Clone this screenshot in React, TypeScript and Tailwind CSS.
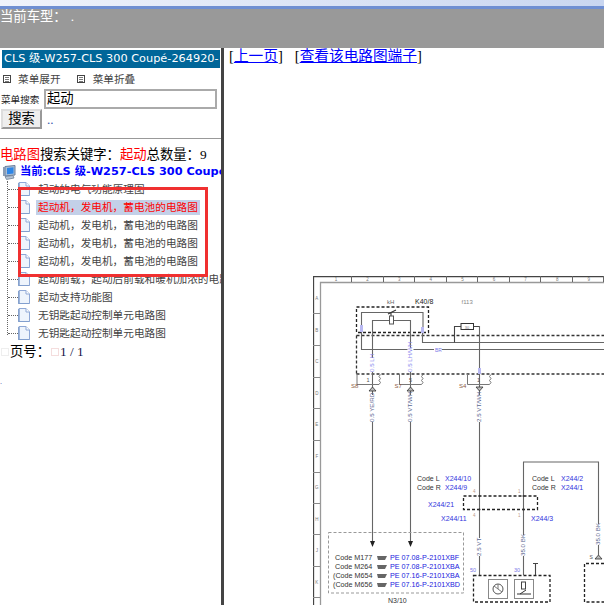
const cjk = "font-['Liberation_Serif','Noto_Sans_CJK_SC',serif]";

const treeRows = [
  "起动的电气功能原理图",
  "起动机，发电机，蓄电池的电路图",
  "起动机，发电机，蓄电池的电路图",
  "起动机，发电机，蓄电池的电路图",
  "起动机，发电机，蓄电池的电路图",
  "起动前载，起动后前载和暖机加浓的电路图",
  "起动支持功能图",
  "无钥匙起动控制单元电路图",
  "无钥匙起动控制单元电路图",
];

const FileIcon = () => (
  <svg width="12" height="14" viewBox="0 0 12 14" className="shrink-0">
    <path d="M1 .5H8L11.5 4V13.5H1Z" fill="#eef4fc" stroke="#8fa8d6" />
    <path d="M.8 1V14H11.5" fill="none" stroke="#7f9ccb" strokeWidth="1.4" />
    <path d="M8 .5V4H11.5" fill="#fff" stroke="#8fa8d6" />
  </svg>
);

const ComputerIcon = () => (
  <svg width="13" height="15" viewBox="0 0 13 15" className="shrink-0">
    <path d="M2 1.5L12 .5V10L2 11Z" fill="#a8bdd6" stroke="#6a7f9c" />
    <path d="M4 3L10.5 2.3V8.6L4 9.3Z" fill="#2f86e6" />
    <path d="M1 2V11" stroke="#8c9db3" strokeWidth="2" />
    <path d="M2 11.5L10 10.5L11 13L3.5 14.5Z" fill="#b7c4d4" stroke="#6f8096" strokeWidth=".8" />
  </svg>
);

const Sq = () => (
  <svg width="8" height="8" viewBox="0 0 8 8" className="shrink-0">
    <rect x=".5" y=".5" width="7" height="7" fill="#fff" stroke="#444" />
    <path d="M2 2.5H6M2 4.5H6M2 6.5H6" stroke="#555" strokeWidth=".8" />
  </svg>
);

const Wire = ({ d, c = "#666", w = 1.1 }: { d: string; c?: string; w?: number }) => (
  <path d={d} fill="none" stroke={c} strokeWidth={w} />
);

const Dash = ({ d, c = "#222", w = 1.3 }: { d: string; c?: string; w?: number }) => (
  <path d={d} fill="none" stroke={c} strokeWidth={w} strokeDasharray="3 2" />
);

// wire label reading upward, wire is blanked behind it
const UpLabel = ({ x, y, t, c = "#5a6690", len = 27 }: { x: number; y: number; t: string; c?: string; len?: number }) => (
  <g>
    <rect x={x - 3} y={y - len} width="6" height={len} fill="#fff" />
    <text x={x} y={y} fontSize="6.2" fill={c} transform={`rotate(-90 ${x} ${y})`} dominantBaseline="middle">
      {t}
    </text>
  </g>
);

const codes = [
  ["Code M177", "PE 07.08-P-2101XBF", 335],
  ["Code M264", "PE 07.08-P-2101XBA", 335],
  ["(Code M654", "PE 07.16-P-2101XBA", 333],
  ["(Code M656", "PE 07.16-P-2101XBD", 333],
] as const;

const connectors = [
  { x: 357, n: "1", s: "S8", lx: 351 },
  { x: 399.5, n: "5", s: "S7", lx: 394.5 },
  { x: 467.5, n: "1", s: "S4", lx: 459 },
];

const Diagram = () => (
  <svg
    width="291"
    height="329"
    viewBox="313 276 291 329"
    className="block shrink-0"
    fontFamily="Liberation Sans, sans-serif"
  >
    {/* frame */}
    <path d="M313.5 605V276.5H604" fill="none" stroke="#444" strokeWidth="1.3" />
    <path d="M320.5 605V282.5H604" fill="none" stroke="#999" strokeWidth="1.3" />
    {[351, 383, 414, 446, 477, 509, 540, 572, 603].map((x) => (
      <Wire key={x} d={`M${x}.5 276V282`} c="#666" w={1} />
    ))}
    {[1, 2, 3, 4, 5, 6, 7, 8, 9].map((n, i) => (
      <text key={n} x={336 + i * 31.6} y={281} fontSize="4.5" fill="#777" textAnchor="middle">
        {n}
      </text>
    ))}
    {[313, 345, 377, 408, 440, 472, 503, 534, 566, 597].map((y) => (
      <Wire key={y} d={`M313 ${y}.5H320`} c="#888" w={1} />
    ))}
    {["A", "B", "C", "D", "E", "F", "G", "H", "J", "K"].map((l, i) => (
      <text key={l} x={316.8} y={300 + i * 31.5} fontSize="4.5" fill="#777" textAnchor="middle">
        {l}
      </text>
    ))}

    {/* K40/8 relay */}
    <text x="387" y="304" fontSize="6" fill="#666">kH</text>
    <text x="415" y="304" fontSize="7" fill="#222">K40/8</text>
    <text x="461.5" y="304" fontSize="6" fill="#888">f113</text>
    <Dash d="M356.5 307H428.5V332.5H356.5Z" />
    <Wire d="M361.5 331V312.5H423V331" />
    <Wire d="M372.5 331V320.5H410.5V331" />
    <Wire d="M391 312.5V316M388 314L396 310" c="#333" />
    <rect x="389.5" y="316" width="4" height="8" fill="#fff" stroke="#555" />
    <Dash d="M356.5 335.5H604M356.5 374H604M356.5 335.5V374" c="#333" />
    <Wire d="M361.5 331V349.5H604" />
    <Wire d="M422.5 331V342.5H604" />
    <rect x="434" y="347" width="8" height="5" fill="#fff" />
    <text x="435" y="351.5" fontSize="5" fill="#7a7ae8">BR</text>

    {/* fuse */}
    <rect x="461" y="323.5" width="12.5" height="6" fill="#fff" stroke="#333" />
    <Wire d="M461 326.5H454.5V342.5M473.5 326.5H479.5" c="#444" />
    <text x="467" y="328.5" fontSize="4" fill="#777" textAnchor="middle">30</text>

    {/* wires */}
    <Wire d="M372.5 331V546" />
    <Wire d="M410.5 331V546" />
    <Wire d="M479.5 326V575" />
    <path d="M370 541H375L372.5 547ZM408 541H413L410.5 547Z" fill="#222" />

    <UpLabel x={372.5} y={372} t="0.5 LH" c="#8a8aee" len={14} />
    <UpLabel x={410.5} y={372} t="0.5 LH/WH" c="#8a8aee" len={24} />
    <rect x="360" y="325" width="3" height="7" fill="#b9b9f2" />
    <rect x="421" y="327" width="3" height="6" fill="#b9b9f2" />
    <rect x="478" y="368" width="3" height="6" fill="#b9b9f2" />

    {/* connectors */}
    {connectors.map(({ x, n, s, lx }) => (
      <g key={s}>
        <path
          d={`M${x} 374V384.5H${x + 22}l1.5 -2l-1.5 -2l1.5 -2l-1.5 -2l1.5 -2`}
          fill="none"
          stroke="#777"
        />
        <text x={x + 9.5} y={382} fontSize="5.5" fill="#555">{n}</text>
        <text x={lx} y={388} fontSize="6" fill="#8a5a44">{s}</text>
      </g>
    ))}
    <path d="M369 391H376L372.5 387ZM407 391H414L410.5 387Z" fill="#bbb" stroke="#333" strokeWidth=".8" />
    <path d="M476 387H483L479.5 391Z" fill="#bbb" stroke="#333" strokeWidth=".8" />
    <UpLabel x={372.5} y={422} t="0.5 YE/RD" />
    <UpLabel x={410.5} y={422} t="0.5 VT/WH" />
    <UpLabel x={479.5} y={422} t="2.5 VT/WH" />

    {/* X244 */}
    <g fontSize="7">
      <text x="417" y="480.5" fill="#333">Code L</text>
      <text x="445" y="480.5" fill="#3333dd">X244/10</text>
      <text x="417" y="490" fill="#333">Code R</text>
      <text x="445" y="490" fill="#3333dd">X244/9</text>
      <text x="532" y="480.5" fill="#333">Code L</text>
      <text x="561" y="480.5" fill="#3333dd">X244/2</text>
      <text x="532" y="490" fill="#333">Code R</text>
      <text x="561" y="490" fill="#3333dd">X244/1</text>
      <text x="428" y="507" fill="#3333dd">X244/21</text>
      <text x="441" y="521" fill="#3333dd">X244/11</text>
      <text x="531" y="521" fill="#3333dd">X244/3</text>
    </g>
    <Dash d="M463.5 496H537.5V509.5H463.5Z" />
    <Wire d="M523.5 575V462H598.5V555" />
    <circle cx="479.5" cy="496" r="1" fill="#333" />
    <circle cx="479.5" cy="509.5" r="1" fill="#333" />
    <circle cx="523.5" cy="496" r="1" fill="#333" />
    <circle cx="523.5" cy="509.5" r="1" fill="#333" />
    <g fontSize="4.5" fill="#b98">
      <text x="473" y="493">4</text>
      <text x="518" y="493">1</text>
      <text x="473" y="517">4</text>
      <text x="518" y="517">1</text>
    </g>
    <UpLabel x={479.5} y={556} t="2.5 VT" len={18} />
    <UpLabel x={523.5} y={556} t="35.0 BK" len={21} />
    <UpLabel x={598.5} y={545} t="35.0 BK" len={21} />
    <path d="M595 559H602L598.5 555Z" fill="#bbb" stroke="#333" strokeWidth=".8" />
    <text x="589.5" y="559" fontSize="5" fill="#555">S</text>

    {/* N3/10 */}
    <Dash d="M328.5 532.5H463.5V593H328.5Z" c="#999" w={1} />
    {codes.map(([code, pe, x], i) => (
      <g key={pe} fontSize="7.2">
        <text x={x} y={559.8 + i * 9} fill="#333">{code}</text>
        <path d={`M377 ${556 + i * 9}H387L385 ${560 + i * 9}H378Z`} fill="#666" />
        <text x="390" y={559.8 + i * 9} fill="#2222dd">{pe}</text>
      </g>
    ))}
    <text x="388" y="602.5" fontSize="7" fill="#333">N3/10</text>

    {/* bottom module */}
    <text x="470" y="572" fontSize="5.5" fill="#7a7ae8">50</text>
    <text x="514" y="572" fontSize="5.5" fill="#7a7ae8">30</text>
    <Dash d="M473.5 575.5H550V602H473.5Z" />
    <Wire d="M535.5 575V563.5M533 563.5H538" c="#444" />
    <rect x="488.5" y="579.5" width="19" height="19" fill="#fff" stroke="#888" />
    <circle cx="498" cy="589" r="5" fill="#fff" stroke="#555" />
    <path d="M494 586L502 592M498 584V589" stroke="#777" fill="none" />
    <rect x="514.5" y="579.5" width="19" height="19" fill="#fff" stroke="#888" />
    <rect x="521.5" y="582" width="4" height="7" fill="#fff" stroke="#444" />
    <path d="M517 594H531M520 594L526 590" stroke="#333" fill="none" />
    <Dash d="M604 563.5H584.5V602H604" />
  </svg>
);

export default function App() {
  return (
    <div className={`relative w-[604px] h-[605px] overflow-hidden bg-white ${cjk}`}>
      {/* window bar */}
      <div className="h-[6px] bg-gradient-to-r from-[#f0f3fb] to-[#c9d6f0]" />
      <div className="h-[3px] bg-[#6f8fd2]" />
      <div className="h-[39px] bg-[#999999] text-white text-[13.33px] leading-[15px] flex">
        <span>当前车型：</span>
        <span className="ml-[4px]">.</span>
      </div>

      <div className="flex h-[558px]">
        {/* left panel */}
        <div className="w-[221px] shrink-0 overflow-hidden">
          <div className="mt-[2px] ml-[2px] h-[18px] w-[218px] bg-[#006699] text-white text-[11.3px] leading-[18px] pl-[2px] whitespace-nowrap overflow-hidden font-['DejaVu_Sans','Noto_Sans_CJK_SC',sans-serif]">
            CLS 级-W257-CLS 300 Coupé-264920-
          </div>
          <div className="flex items-center h-[12px] mt-[5px] ml-[3px] text-[10.67px] text-[#444]">
            <Sq />
            <span className="ml-[7px]">菜单展开</span>
            <span className="ml-[16px]"><Sq /></span>
            <span className="ml-[8px]">菜单折叠</span>
          </div>
          <div className="flex items-center mt-[3px] h-[21px]">
            <span className="w-[44px] pl-[1px] text-[9.6px] text-[#222] pt-[3px]">菜单搜索</span>
            <div className="w-[173px] h-[20px] border-2 border-[#aaaaaa] text-[13.33px] leading-[15px] pl-[1px] text-black">
              起动
            </div>
          </div>
          <div className="flex items-center h-[20px]">
            <div className="ml-[1px] w-[41px] h-[20px] bg-[#eeeeee] border-2 border-t-[#dddddd] border-l-[#dddddd] border-r-[#999999] border-b-[#999999] text-[13.33px] leading-[16px] text-center text-black">
              搜索
            </div>
            <span className="ml-[5px] text-[#3355aa] text-[13px] leading-[12px] pt-[2px]">..</span>
          </div>
          <div className="mt-[9px] h-[1px] bg-[#999999]" />
          <div className="mt-[7px] text-[13.33px] leading-[17px] whitespace-nowrap text-black">
            <span className="text-[#ff0000]">电路图</span>搜索关键字：<span className="text-[#ff0000]">起动</span>总数量：9
          </div>
          <div className="flex items-center h-[17px] mt-[1px] ml-[3px] whitespace-nowrap">
            <ComputerIcon />
            <span className="ml-[4px] text-[11.3px] font-bold text-[#0000ff] font-['DejaVu_Sans','Noto_Sans_CJK_SC',sans-serif]">
              当前:CLS 级-W257-CLS 300 Coupé-264920
            </span>
          </div>

          {/* tree */}
          <div className="relative ml-[7px] border-l border-dotted border-[#666666] h-[154px]">
            <div className="absolute left-0 -top-[1px] w-[300px]">
              {treeRows.map((row, i) => (
                <div key={i} className="flex items-center h-[18px]">
                  <div className="w-[10px] border-t border-dotted border-[#666666]" />
                  <FileIcon />
                  <span
                    className={
                      i === 1
                        ? "ml-[6px] px-[2px] h-[15px] leading-[15px] text-[10.67px] text-[#ff0000] bg-[#c3d0e8] whitespace-nowrap"
                        : "ml-[6px] px-[2px] h-[15px] leading-[15px] text-[10.67px] text-[#444444] whitespace-nowrap"
                    }
                  >
                    {row}
                  </span>
                </div>
              ))}
            </div>
          </div>

          <div className="flex items-center h-[16px] mt-[9px] text-[13.33px] text-black">
            <span className="ml-[1px] w-[8px] h-[8px] border border-[#eeeeee]" />
            <span className="ml-[1px]">页号：</span>
            <span className="ml-[1px] w-[8px] h-[8px] border border-[#f4dddd]" />
            <span className="ml-[1px] text-[#111144]">1 / 1</span>
          </div>
          <div className="mt-[19px] h-[6px] text-[8px] leading-[6px] text-[#3355aa]">.</div>
        </div>

        <div className="w-[3px] shrink-0 bg-[#444444]" />

        {/* right panel */}
        <div className="flex-1 min-w-0 overflow-hidden">
          <div className="ml-[5px] h-[16px] flex text-[14.67px] leading-[16px] whitespace-nowrap text-black">
            <span>[<span className="text-[#0000ff] underline">上一页</span>]</span>
            <span className="ml-[12px]">[<span className="text-[#0000ff] underline">查看该电路图端子</span>]</span>
          </div>
          <div className="ml-[89px] mt-[212px]">
            <Diagram />
          </div>
        </div>
      </div>

      {/* red marker drawn over the tree */}
      <div className="absolute left-[18px] top-[187px] w-[190px] h-[90px] border-[3px] border-[#f03030]" />
    </div>
  );
}
